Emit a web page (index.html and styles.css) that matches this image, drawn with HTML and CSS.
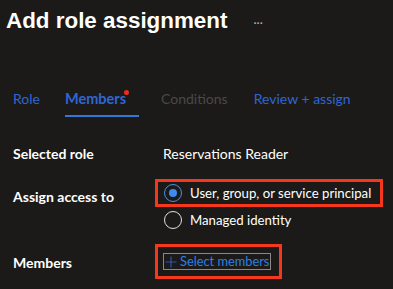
FILE: index.html
```html
<!DOCTYPE html>
<html lang="en">
<head>
    <meta charset="UTF-8">
    <meta name="viewport" content="width=device-width, initial-scale=1.0">
    <title>Add role assignment</title>
    <link rel="stylesheet" href="styles.css">
</head>
<body>

    <div class="header">
        <h1>Add role assignment</h1>
        <span class="more">···</span>
    </div>

    <div class="tabs">
        <span class="tab role">Role</span>
        <span class="tab active">Members<span class="dot"></span></span>
        <span class="tab disabled">Conditions</span>
        <span class="tab">Review + assign</span>
    </div>

    <div class="form">
        <div class="label">Selected role</div>
        <div class="value">Reservations Reader</div>

        <div class="label access-label">Assign access to</div>
        <div class="value radios">
            <div class="highlight">
                <label class="radio"><span class="circle checked"></span>User, group, or service principal</label>
            </div>
            <label class="radio second"><span class="circle"></span>Managed identity</label>
        </div>

        <div class="label members-label">Members</div>
        <div class="value">
            <div class="highlight members-box">
                <a class="select-link" href="#">
                    <svg width="12" height="12" viewBox="0 0 12 12"><path d="M6 0.5V11.5M0.5 6H11.5" stroke="#2b55b0" stroke-width="1.2"/></svg>
                    Select members
                </a>
            </div>
        </div>
    </div>

</body>
</html>
```

FILE: styles.css
```css
body {
    margin: 0;
    background-color: #1b1a19;
    font-family: Lato, "Noto Sans", sans-serif;
    color: #ffffff;
    height: 289px;
    overflow: hidden;
}
.header {
    display: flex;
    align-items: center;
    padding: 6px 0 0 6px;
    height: 30px;
}
h1 {
    margin: 0;
    font-family: "Liberation Sans", Arial, sans-serif;
    font-weight: bold;
    font-size: 22.4px;
    line-height: 30px;
}
.more {
    margin-left: 26px;
    color: #b0aeac;
    font-size: 12px;
    padding-top: 2px;
}
.tabs {
    display: flex;
    padding: 53px 0 0 13px;
    font-size: 14px;
    white-space: nowrap;
}
.tab {
    color: #2f66d4;
    line-height: 20px;
    padding-bottom: 7px;
    margin-right: 25px;
    position: relative;
}
.tab.role {
    margin-right: 25px;
}
.tab.active {
    font-weight: bold;
    font-size: 14.5px;
    padding-right: 13px;
    margin-right: 22px;
    border-bottom: 2px solid #2f7ad8;
    padding-bottom: 6px;
}
.tab.disabled {
    color: #4a4948;
    margin-right: 26px;
}
.dot {
    position: absolute;
    top: 1px;
    right: 10px;
    width: 5px;
    height: 5px;
    border-radius: 50%;
    background-color: #f2291b;
}
.form {
    display: grid;
    grid-template-columns: 150px 1fr;
    padding: 28px 0 0 13px;
    font-size: 14px;
    line-height: 18px;
    white-space: nowrap;
}
.label {
    font-weight: bold;
}
.access-label {
    margin-top: 25px;
}
.radios {
    margin-top: 16px;
    margin-left: -8px;
}
.highlight {
    border: 3px solid #f5371d;
    display: inline-block;
    padding: 1px 9px 1px 6px;
}
.radio {
    display: flex;
    align-items: center;
    font-size: 13.2px;
    line-height: 20px;
}
.radio.second {
    padding: 3px 0 0 9px;
}
.circle {
    width: 18px;
    height: 18px;
    border: 1px solid #e0e0e0;
    border-radius: 50%;
    margin-right: 8px;
    box-sizing: border-box;
    display: inline-flex;
    align-items: center;
    justify-content: center;
}
.circle.checked {
    border-color: #4a90e2;
}
.circle.checked::after {
    content: "";
    width: 8px;
    height: 8px;
    border-radius: 50%;
    background-color: #3d8bf0;
}
.members-label {
    margin-top: 24px;
}
.members-box {
    margin-top: 14px;
    margin-left: -8px;
    padding: 6px 8px 6px 5px;
}
.select-link {
    display: flex;
    align-items: center;
    gap: 3px;
    color: #2f80e0;
    text-decoration: none;
    font-size: 12.8px;
    line-height: 15px;
    border: 1px solid #8a8886;
    padding: 0 1px 0 1px;
}
```
